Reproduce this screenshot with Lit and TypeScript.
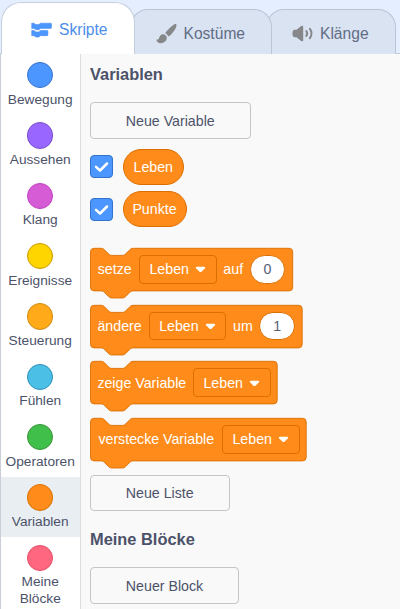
import { LitElement, html, svg, css } from "lit";
import { customElement, property } from "lit/decorators.js";

const SCALE = 0.887;

@customElement("tab-bar")
class TabBar extends LitElement {
  static styles = css`
    :host { display: block; height: 54px; background: #e5eeff; overflow: hidden; }
    .bar { display: flex; align-items: flex-end; height: 54px; padding-left: 1px; box-sizing: border-box; border-bottom: 1px solid #c3cddd; }
    .tab { box-sizing: border-box; display: flex; align-items: center; height: 45px; margin-bottom: -1px; border: 1px solid #b9c4d6; border-bottom: 0; border-radius: 18px 18px 0 0; background: #d9e3f2; color: #626d85; font-size: 15.6px; white-space: nowrap; }
    .scripts { position: relative; z-index: 3; width: 134px; height: 52px; padding: 3px 0 0 29px; background: #fff; color: #4c8de8; border-color: #c6cfde; border-radius: 20px 20px 0 0; }
    .costumes { position: relative; z-index: 2; width: 142px; margin-left: -5px; padding: 3px 0 0 25px; }
    .sounds { width: 130px; margin-left: -6px; padding: 3px 0 0 25px; }
    svg { display: block; flex: none; overflow: visible; }
    .scripts svg { margin-right: 7px; }
    .costumes svg { margin-right: 6.5px; }
    .sounds svg { margin-right: 7px; }
  `;
  render() {
    return html`<div class="bar">
      <div class="tab scripts">
        <svg width="21" height="16" viewBox="0 0 21 16"><g fill="#4c97ff" stroke="#3f83e6" stroke-width=".5">
          <path d="M.7 1.200h2.500l1.500 1.400h3.200L9.400 1.200h10.300q.8 0 .8.8v3.600q0 .8-.8.8H9.400L7.900 7.800H4.700L3.200 6.400H.7z"/>
          <path d="M.7 8.500h2.500l1.500 1.400h3.200l1.500-1.400h6.800q.7 0 .7.8v3.600q0 .8-.7.8H9.400l-1.500 1.400H4.700l-1.500-1.400H.7z"/></g></svg>
        <span>Skripte</span>
      </div>
      <div class="tab costumes">
        <svg width="21" height="21" viewBox="0 0 21 21" fill="#858789">
          <path d="M20 1.100c.8.7.5 2.500-.4 4.200-1.400 2.800-4.200 6.600-7.200 8.200-.8-1.600-1.800-2.600-3.200-3.300C11.300 7.100 16.600 2.200 19 1.100q.6-.3 1 0z"/>
          <path d="M7.300 11.300c2.300.2 3.900 2.100 3.500 4.300-.5 2.900-3.200 4.800-6.100 4.600-2.200-.1-4-1.500-4.500-3.800.8.7 2.200.4 2.700-.8.700-2.200 1.700-4.400 4.400-4.300z"/></svg>
        <span>Kostüme</span>
      </div>
      <div class="tab sounds">
        <svg width="21" height="17" viewBox="0 0 21 17">
          <path fill="#858789" d="M2 4.700h2.500L9.200 1q1.900-1 2 .7v13.600q-.1 1.700-2 .7L4.500 12.300H2Q.4 11.500.4 8.500T2 4.700z"/>
          <path fill="none" stroke="#858789" stroke-width="2" stroke-linecap="round" d="M14.300 6q1.700 2.500 0 5M17.900 3.900q3.200 4.600 0 9.200"/></svg>
        <span>Klänge</span>
      </div>
    </div>`;
  }
}

@customElement("category-menu")
class CategoryMenu extends LitElement {
  static styles = css`
    :host { display: block; box-sizing: border-box; width: 81px; flex: none; background: #fff; border-left: 1px solid #c9ced8; border-right: 1px solid #dcdee2; padding-top: .4px; overflow: hidden; }
    .item { box-sizing: border-box; height: 60.330px; padding: 7.600px .6px 0 0; display: flex; flex-direction: column; align-items: center; text-align: center; }
    .selected { background: #e9eef2; }
    .dot { box-sizing: border-box; width: 26.400px; height: 26.400px; flex: none; border-radius: 50%; border: 1px solid; }
    .label { margin-top: 3.400px; font-size: 13.700px; line-height: 16.300px; white-space: pre; color: #4c5269; }
  `;
  private items = [
    ["Bewegung", "#4c97ff", "#3373cc"],
    ["Aussehen", "#9966ff", "#774dcb"],
    ["Klang", "#d65cd6", "#bd42bd"],
    ["Ereignisse", "#ffd500", "#cc9900"],
    ["Steuerung", "#ffab19", "#cf8b17"],
    ["Fühlen", "#4cbfe6", "#2e8eb8"],
    ["Operatoren", "#40bf4a", "#389438"],
    ["Variablen", "#ff8c1a", "#db6e00"],
    ["Meine\nBlöcke", "#ff6680", "#e64d68"],
  ];
  render() {
    return this.items.map(([name, fill, edge]) => html`
      <div class="item ${name === "Variablen" ? "selected" : ""}">
        <div class="dot" style="background:${fill};border-color:${edge}"></div>
        <div class="label">${name}</div>
      </div>`);
  }
}

@customElement("stack-block")
class StackBlock extends LitElement {
  @property() label = "";
  @property() joiner = "";
  @property() value = "";
  @property({ type: Number }) width = 200;
  @property({ type: Number }) labelWidth = 40;
  static styles = css`
    :host { display: block; position: relative; height: 56.700px; color: #fff; font-size: 14.200px; white-space: nowrap; }
    .shape { position: absolute; left: 0; top: 0; overflow: visible; }
    .row { position: relative; display: flex; align-items: center; gap: 7.400px; height: 42.600px; padding-left: 7.400px; }
    .label { text-align: center; flex: none; }
    .field { box-sizing: border-box; display: flex; align-items: center; width: 77.200px; height: 28.800px; padding-left: 9px; border: 1px solid #db6e00; border-radius: 4px; }
    .arrow { margin-left: 6.500px; margin-top: 1px; }
    .joiner { margin: 0 -.7px; }
    .input { box-sizing: border-box; width: 35.500px; height: 28.600px; border: 1px solid #db6e00; border-radius: 15px; background: #fff; color: #575e75; display: flex; align-items: center; justify-content: center; }
  `;
  render() {
    const w = (this.width - 0.8) / SCALE;
    const d = `M0,4 A4,4 0 0 1 4,0 H12 c2,0 3,1 4,2 l4,4 c1,1 2,2 4,2 h12 c2,0 3,-1 4,-2 l4,-4 c1,-1 2,-2 4,-2 H${w - 4} a4,4 0 0 1 4,4 v40 a4,4 0 0 1 -4,4 H48 c-2,0 -3,1 -4,2 l-4,4 c-1,1 -2,2 -4,2 h-12 c-2,0 -3,-1 -4,-2 l-4,-4 c-1,-1 -2,-2 -4,-2 H4 a4,4 0 0 1 -4,-4 z`;
    return html`
      <svg class="shape" width=${this.width} height="50">
        ${svg`<path transform="translate(.5 .3) scale(${SCALE})" d=${d} fill="#ff8c1a" stroke="#db6e00" stroke-width="1"/>`}
      </svg>
      <div class="row">
        <span class="label" style="width:${this.labelWidth}px">${this.label}</span>
        <span class="field">Leben
          <svg class="arrow" width="11" height="7" viewBox="0 0 11 7"><path fill="#fff" d="M1.800.700h7.400q1.600.2.700 1.500L6.500 5.700q-1 .8-2 0L1.100 2.200Q.2.900 1.800.700z"/></svg>
        </span>
        ${this.joiner ? html`<span class="joiner">${this.joiner}</span><span class="input">${this.value}</span>` : ""}
      </div>`;
  }
}

@customElement("variable-row")
class VariableRow extends LitElement {
  @property() name = "";
  @property({ type: Number }) width = 60;
  static styles = css`
    :host { display: flex; align-items: center; height: 36px; gap: 9.500px; }
    .check { display: block; flex: none; overflow: visible; }
    .pill { box-sizing: border-box; height: 36px; border: 1px solid #db6e00; border-radius: 18px; background: #ff8c1a; color: #fff; font-size: 14.200px; display: flex; align-items: center; justify-content: center; }
  `;
  render() {
    return html`
      <svg class="check" width="23" height="23" viewBox="0 0 23 23">
        <rect x=".5" y=".5" width="22" height="22" rx="3.500" fill="#4c97ff" stroke="#3373cc"/>
        <path d="M6 11.800l4 3.700 7-7" fill="none" stroke="#fff" stroke-width="2.500" stroke-linecap="round" stroke-linejoin="round"/>
      </svg>
      <div class="pill" style="width:${this.width}px">${this.name}</div>`;
  }
}

@customElement("app-root")
class AppRoot extends LitElement {
  static styles = css`
    :host { display: block; height: 609px; overflow: hidden; font-family: "Liberation Sans", Arial, sans-serif; background: #f9f9f9; }
    .body { display: flex; height: 555px; }
    .palette { flex: 1; padding-left: 9px; background: #f9f9f9; }
    .title { margin: 0; font-size: 16.400px; line-height: 20px; color: #4c5269; font-weight: bold; }
    .first { padding-top: 10.400px; }
    .second { padding-top: 17.500px; }
    .button { box-sizing: border-box; height: 36.500px; border: 1px solid #c4c5c8; border-radius: 4px; display: flex; align-items: center; justify-content: center; font-size: 14.200px; color: #4c5269; }
    .new-variable { width: 160.500px; margin-top: 17.900px; }
    .new-list { width: 139.500px; }
    .new-block { width: 149px; margin-top: 18.500px; }
    .variables { display: flex; flex-direction: column; gap: 6.500px; padding: 10.200px 0 20.600px; }
  `;
  render() {
    return html`
      <tab-bar></tab-bar>
      <div class="body">
        <category-menu></category-menu>
        <div class="palette">
          <h2 class="title first">Variablen</h2>
          <div class="button new-variable">Neue Variable</div>
          <div class="variables">
            <variable-row name="Leben" .width=${61.5}></variable-row>
            <variable-row name="Punkte" .width=${64}></variable-row>
          </div>
          <stack-block label="setze" joiner="auf" value="0" .width=${203} .labelWidth=${34.7}></stack-block>
          <stack-block label="ändere" joiner="um" value="1" .width=${212.5} .labelWidth=${44.4}></stack-block>
          <stack-block label="zeige Variable" .width=${187.5} .labelWidth=${88.7}></stack-block>
          <stack-block label="verstecke Variable" .width=${216.5} .labelWidth=${117.7}></stack-block>
          <div class="button new-list">Neue Liste</div>
          <h2 class="title second">Meine Blöcke</h2>
          <div class="button new-block">Neuer Block</div>
        </div>
      </div>`;
  }
}
